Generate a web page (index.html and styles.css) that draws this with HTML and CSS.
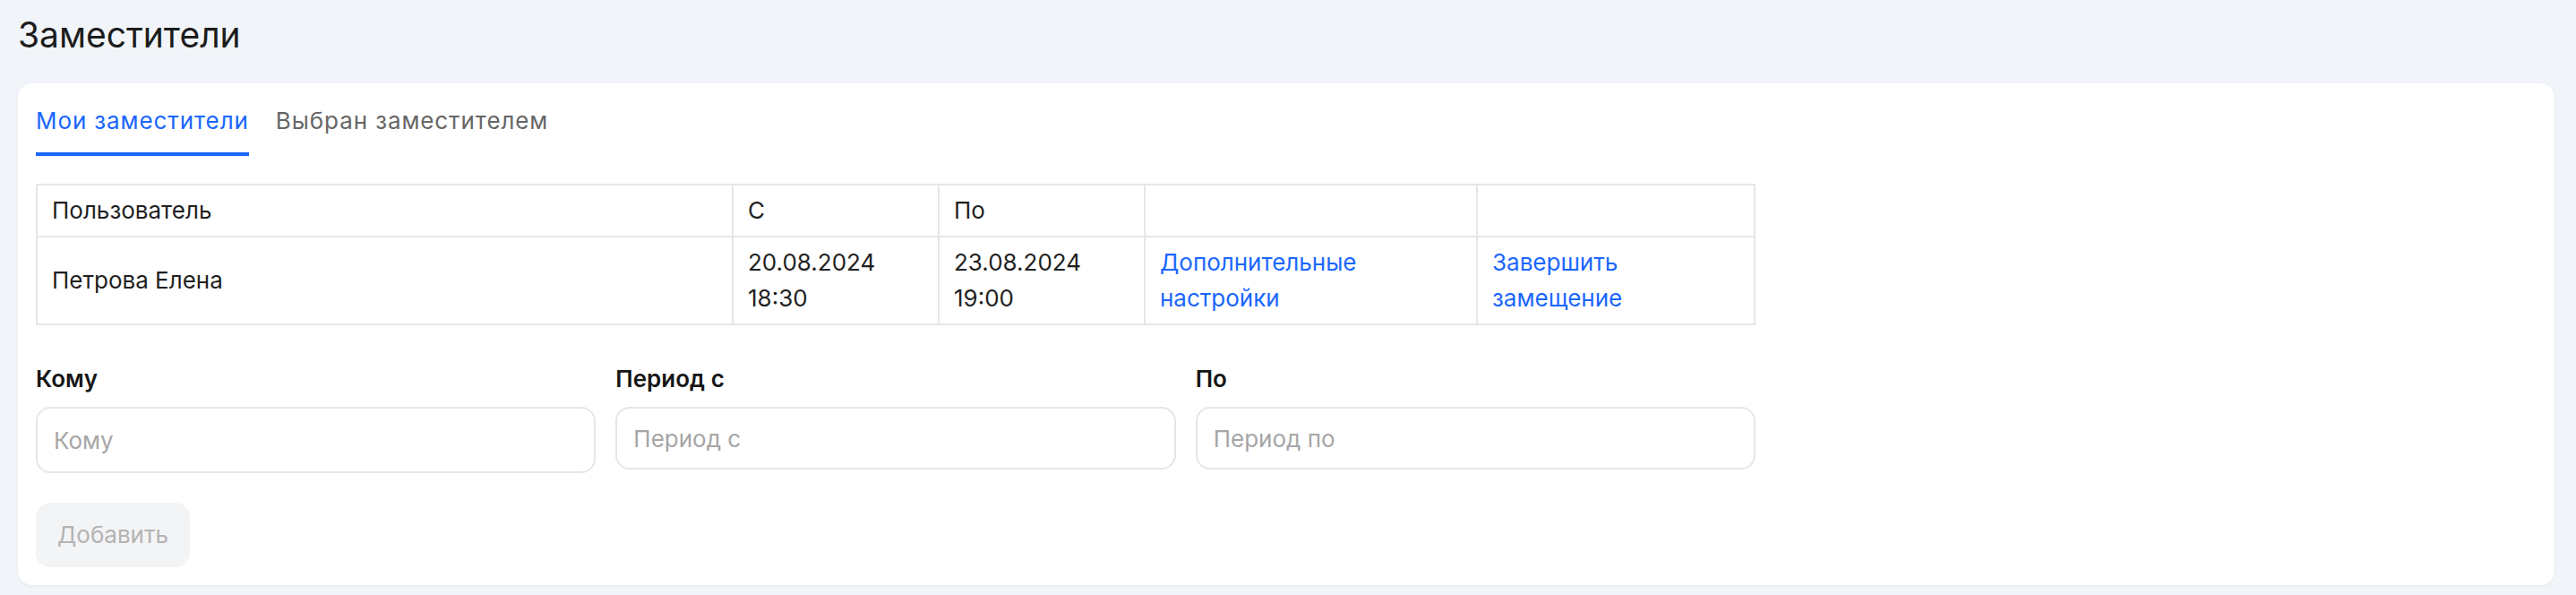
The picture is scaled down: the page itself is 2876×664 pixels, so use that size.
FILE: index.html
```html
<!DOCTYPE html>
<html lang="ru">
<head>
<meta charset="UTF-8">
<meta name="viewport" content="width=device-width, initial-scale=1.0">
<title>Заместители</title>
<link rel="stylesheet" href="styles.css">
</head>
<body>
<h1 class="page-title">Заместители</h1>
<div class="card">
    <div class="tabs">
        <a class="tab tab-active" href="#">Мои заместители</a>
        <a class="tab" href="#">Выбран заместителем</a>
    </div>
    <table class="deputies">
        <thead>
            <tr>
                <th class="col-user">Пользователь</th>
                <th class="col-date">С</th>
                <th class="col-date">По</th>
                <th class="col-link"></th>
                <th class="col-action"></th>
            </tr>
        </thead>
        <tbody>
            <tr>
                <td>Петрова Елена</td>
                <td>20.08.2024 18:30</td>
                <td>23.08.2024 19:00</td>
                <td><a class="link" href="#">Дополнительные настройки</a></td>
                <td><a class="link" href="#">Завершить замещение</a></td>
            </tr>
        </tbody>
    </table>
    <div class="form">
        <div class="field">
            <label class="field-label" for="to">Кому</label>
            <input class="field-input field-input-tall" id="to" type="text" placeholder="Кому">
        </div>
        <div class="field">
            <label class="field-label" for="from">Период с</label>
            <input class="field-input" id="from" type="text" placeholder="Период с">
        </div>
        <div class="field">
            <label class="field-label" for="till">По</label>
            <input class="field-input" id="till" type="text" placeholder="Период по">
        </div>
    </div>
    <button class="add-button" disabled>Добавить</button>
</div>
</body>
</html>
```

FILE: styles.css
```css
* {
    box-sizing: border-box;
}
body {
    margin: 0;
    padding: 15px 24px 10px 20px;
    background-color: #f1f4f8;
    color: #1f1f1f;
    font-family: Inter, "Noto Sans", sans-serif;
    font-size: 26px;
    line-height: 40px;
}
.page-title {
    margin: 0;
    font-size: 39px;
    line-height: 48px;
    font-weight: 400;
    color: #1c1c1c;
}
.card {
    margin-top: 30px;
    padding: 22px 20px 20px;
    background: #fff;
    border-radius: 16px;
    box-shadow: 0 1px 4px rgba(0, 0, 0, 0.05);
}
.tabs {
    display: flex;
    gap: 30px;
}
.tab {
    padding-bottom: 15px;
    border-bottom: 4px solid transparent;
    color: #666;
    letter-spacing: 0.9px;
    text-decoration: none;
}
.tab-active {
    color: #1a66ff;
    border-bottom-color: #1a66ff;
}
.deputies {
    margin-top: 31px;
    width: 1920px;
    table-layout: fixed;
    border-collapse: separate;
    border-spacing: 0;
    border-left: 2px solid #e6e6e6;
    border-top: 2px solid #e6e6e6;
}
.deputies th,
.deputies td {
    padding: 8px 16px;
    border-right: 2px solid #e6e6e6;
    border-bottom: 2px solid #e6e6e6;
    text-align: left;
    font-weight: 400;
    vertical-align: middle;
}
.col-user {
    width: 777px;
}
.col-date {
    width: 230px;
}
.col-link {
    width: 371px;
}
.col-action {
    width: 310px;
}
.link {
    color: #1a66ff;
    text-decoration: none;
}
.form {
    display: grid;
    grid-template-columns: repeat(3, 1fr);
    column-gap: 22px;
    width: 1920px;
    margin-top: 40px;
    align-items: start;
}
.field-label {
    display: block;
    margin-bottom: 11px;
    font-weight: 600;
    color: #161616;
}
.field-input {
    display: block;
    width: 100%;
    height: 70px;
    padding: 0 18px;
    border: 2px solid #e6e6e6;
    border-radius: 16px;
    font-family: inherit;
    font-size: 26px;
    color: #1f1f1f;
    outline: none;
}
.field-input-tall {
    height: 74px;
}
.field-input::placeholder {
    color: #a6a6a6;
}
.add-button {
    display: block;
    margin-top: 33px;
    padding: 16px 24px;
    border: none;
    border-radius: 16px;
    background: #f3f4f6;
    color: #b3b3b3;
    font-family: inherit;
    font-size: 26px;
    line-height: 40px;
}
```
